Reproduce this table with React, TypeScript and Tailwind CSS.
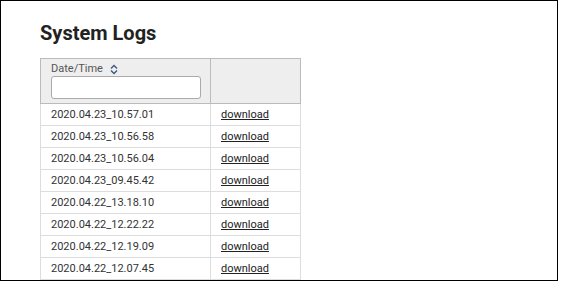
const logs = [
  '2020.04.23_10.57.01',
  '2020.04.23_10.56.58',
  '2020.04.23_10.56.04',
  '2020.04.23_09.45.42',
  '2020.04.22_13.18.10',
  '2020.04.22_12.22.22',
  '2020.04.22_12.19.09',
  '2020.04.22_12.07.45',
];

function SortIcon() {
  return (
    <svg width="8" height="11" viewBox="0 0 8 11" className="ml-[7px]">
      <path d="M1 4.5 L4 1.5 L7 4.5" fill="none" stroke="#3d5a80" strokeWidth="1.4" />
      <path d="M1 6.5 L4 9.5 L7 6.5" fill="none" stroke="#3d5a80" strokeWidth="1.4" />
    </svg>
  );
}

export default function App() {
  return (
    <div className="w-[558px] h-[281px] border border-black bg-white overflow-hidden font-['Roboto',sans-serif]">
      <div className="pl-[39px] pt-[20px]">
        <h1 className="text-[20px] leading-[24px] font-bold text-[#222]">System Logs</h1>
        <table className="mt-[13px] border-collapse text-[11px] text-[#333]">
          <thead>
            <tr className="bg-[#eeeeee]">
              <th className="w-[170px] h-[45px] border border-[#bbbbbb] pl-[10px] pr-[9px] pt-[3px] pb-[3px] text-left font-normal align-top">
                <div className="flex items-center text-[#555] leading-[14px]">
                  Date/Time
                  <SortIcon />
                </div>
                <input
                  type="text"
                  className="block w-[150px] h-[23px] rounded-[3px] border border-[#aaaaaa] bg-white"
                />
              </th>
              <th className="w-[90px] border border-[#bbbbbb]"></th>
            </tr>
          </thead>
          <tbody>
            {logs.map((d) => (
              <tr key={d}>
                <td className="h-[22px] border border-[#dddddd] px-[10px] leading-[14px]">{d}</td>
                <td className="h-[22px] border border-[#dddddd] px-[10px] leading-[14px]">
                  <a href="#" className="underline text-[#222]">download</a>
                </td>
              </tr>
            ))}
          </tbody>
        </table>
      </div>
    </div>
  );
}
